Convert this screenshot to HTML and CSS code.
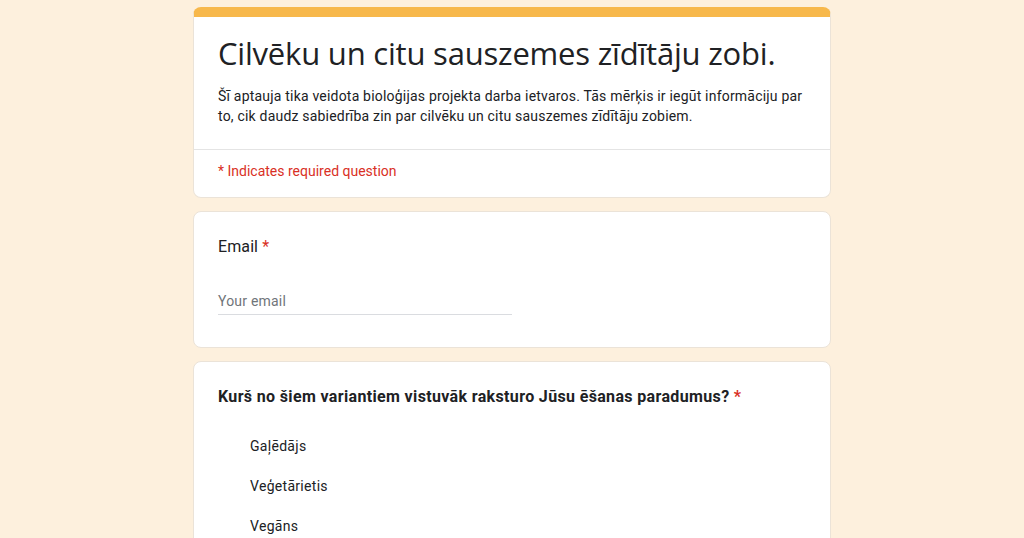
FILE: index.html
```html
<!DOCTYPE html>
<html lang="lv">
<head>
  <meta charset="UTF-8" />
  <meta name="viewport" content="width=device-width, initial-scale=1.0"/>
  <title>Cilvēku un citu sauszemes zīdītāju zobi.</title>
  <link rel="stylesheet" href="styles.css">
</head>
<body>

  <div class="form">
    <div class="card header-card">
      <div class="header-main">
        <h1>Cilvēku un citu sauszemes zīdītāju zobi.</h1>
        <p class="desc">Šī aptauja tika veidota bioloģijas projekta darba ietvaros. Tās mērķis ir iegūt informāciju par to, cik daudz sabiedrība zin par cilvēku un citu sauszemes zīdītāju zobiem.</p>
      </div>
      <div class="required-note">* Indicates required question</div>
    </div>

    <div class="card question email-q">
      <div class="q-title">Email <span class="star">*</span></div>
      <div class="email-field">Your email</div>
    </div>

    <div class="card question">
      <div class="q-title bold">Kurš no šiem variantiem vistuvāk raksturo Jūsu ēšanas paradumus? <span class="star">*</span></div>
      <div class="options">
        <div class="option">Gaļēdājs</div>
        <div class="option">Veģetārietis</div>
        <div class="option">Vegāns</div>
      </div>
    </div>
  </div>

</body>
</html>
```

FILE: styles.css
```css
body {
  margin: 0;
  background: #fdf0dd;
  font-family: Roboto, "Liberation Sans", sans-serif;
  color: #202124;
}

.form {
  width: 638px;
  margin: 7px auto 0;
  display: flex;
  flex-direction: column;
  gap: 13px;
}

.card {
  background: #fff;
  border: 1px solid #ebe3d8;
  border-radius: 8px;
}

.header-card {
  border-top: 10px solid #f7b84b;
}

.header-main {
  padding: 14px 24px 23px;
}

h1 {
  margin: 0;
  font-family: "Open Sans", Roboto, sans-serif;
  font-weight: 400;
  font-size: 31px;
  line-height: 44px;
  letter-spacing: -0.2px;
}

.desc {
  margin: 11px 0 0;
  font-size: 14px;
  line-height: 20px;
  letter-spacing: 0.2px;
}

.required-note {
  border-top: 1px solid #e4e4e4;
  padding: 11px 24px 16px;
  font-size: 14px;
  line-height: 20px;
  color: #d93025;
}

.question {
  padding: 23px 24px 24px;
}

.email-q {
  padding-bottom: 32px;
}

.q-title {
  font-size: 16px;
  line-height: 24px;
  letter-spacing: 0.1px;
}

.q-title.bold {
  font-weight: 700;
  letter-spacing: 0.35px;
}

.star {
  color: #d93025;
}

.email-field {
  width: 294px;
  margin-top: 32px;
  padding-bottom: 3px;
  border-bottom: 1px solid #dadce0;
  font-size: 14px;
  line-height: 20px;
  color: #70757a;
  letter-spacing: 0.2px;
}

.options {
  padding: 27px 0 0 32px;
  display: flex;
  flex-direction: column;
  gap: 20px;
}

.option {
  font-size: 14px;
  line-height: 20px;
  letter-spacing: 0.3px;
}
```
